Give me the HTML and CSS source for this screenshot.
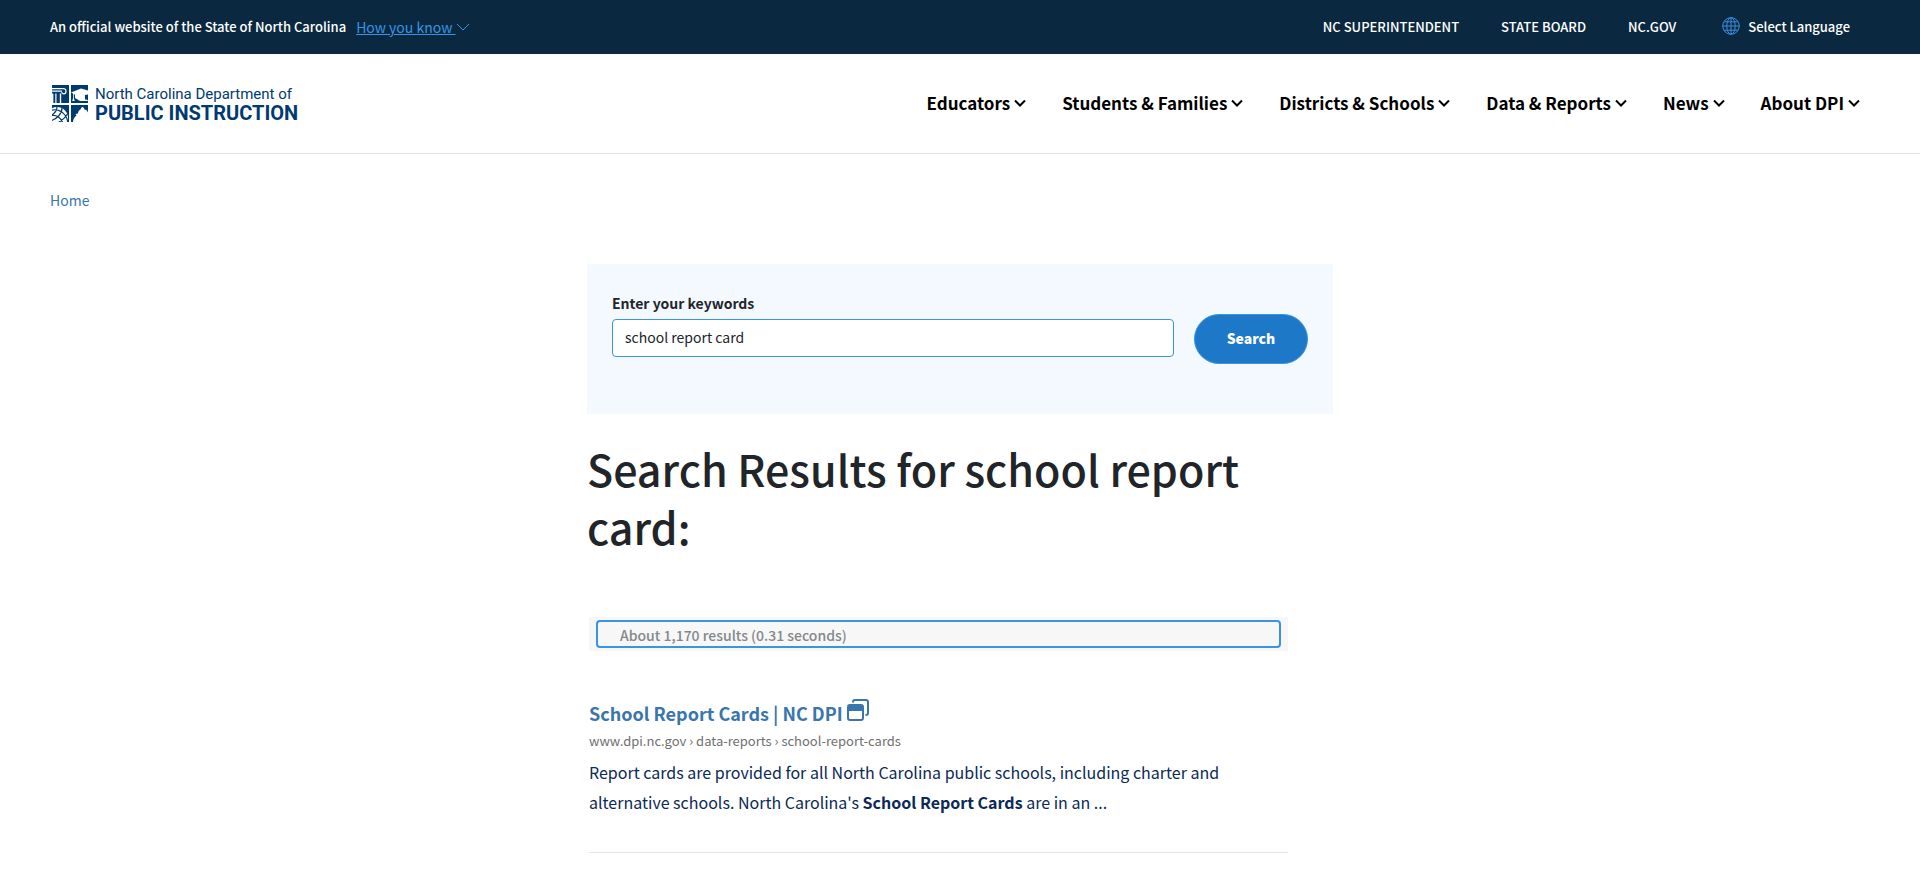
FILE: index.html
```html
<!DOCTYPE html>
<html lang="en">
<head>
<meta charset="utf-8">
<meta name="viewport" content="width=device-width, initial-scale=1">
<title>Search | NC DPI</title>
<link rel="stylesheet" href="styles.css">
</head>
<body>
<div class="topbar">
  <div class="official">
    <span>An official website of the State of North Carolina</span>
    <a class="know" href="#"><span class="know-text">How you know&nbsp;</span><svg class="know-icon" viewBox="0 0 14 14" aria-hidden="true"><path d="M1 4l6 6 6-6"/></svg></a>
  </div>
  <nav class="utility" aria-label="Utility">
    <a href="#">NC SUPERINTENDENT</a>
    <a href="#">STATE BOARD</a>
    <a href="#">NC.GOV</a>
    <button class="language" type="button"><svg class="globe" viewBox="0 0 18 18" aria-hidden="true"><circle cx="9" cy="9" r="8.300"/><ellipse cx="9" cy="9" rx="4.200" ry="8.300"/><path d="M9 .7v16.600M.7 9h16.600M2 4.800h14M2 13.200h14"/></svg><span>Select Language</span></button>
  </nav>
</div>
<header class="header">
  <a class="logo" href="#" aria-label="North Carolina Department of Public Instruction">
    <svg class="seal" viewBox="0 0 36 37" aria-hidden="true">
      <path class="ink" d="M0 0h17v18H0zM19 0h17v18H19zM0 20h17v17H0zM19 20h17v17H19z"/>
      <path class="cut" d="M0 3h10v1.200H0zM0 5.600h10v1.200H0zM0 8.500h1.400V18H0zM3.300 8.500h1.200V18H3.300zM7.800 8.500h1.400V18H7.800z"/>
      <path class="ring" d="M10 3.800c2.600-.8 4 .6 4 2.400s-1.200 2.600-2.400 2.600-1.800-.8-1.800-1.800"/>
      <path class="cut" d="M19 7.500L29 3.500l7 2v4L33 10v4.500c2 0 3 .5 3 1.500h-8l-5-3V9.700l-1.200-.6v4.200l1 2.700h-2.600l.8-2.700V8.500z"/>
      <path class="cut" d="M21 37c0-3 1.500-5 3.500-6.500l-1-1.500 2.500-.5c0-2 1.200-3.500 2.500-4 .5-1.500 1-2.500 2-2.500s1.500 1 2 2.500l2 .5 1.500 2.500v9.500z"/>
      <svg x="0" y="20" width="17" height="17" viewBox="0 20 17 17">
        <circle class="cut" cx="5" cy="33" r="11"/>
        <path class="grid" d="M-2 26c6-3 12 0 15 4s3 6 3 9M-2 31c6-2 10 1 13 7M5 22c0 4-3 7-7 9M10 23c0 6-5 11-12 13M15.500 29c-3 5-6 7-10 9"/>
      </svg>
    </svg>
    <span class="logo-text"><span class="logo-top">North Carolina Department of</span><span class="logo-main">PUBLIC INSTRUCTION</span></span>
  </a>
  <nav class="main-nav" aria-label="Main">
    <button type="button">Educators<svg viewBox="0 0 12 8" aria-hidden="true"><path d="M1 1.500l5 5 5-5"/></svg></button>
    <button type="button">Students &amp; Families<svg viewBox="0 0 12 8" aria-hidden="true"><path d="M1 1.500l5 5 5-5"/></svg></button>
    <button type="button">Districts &amp; Schools<svg viewBox="0 0 12 8" aria-hidden="true"><path d="M1 1.500l5 5 5-5"/></svg></button>
    <button type="button">Data &amp; Reports<svg viewBox="0 0 12 8" aria-hidden="true"><path d="M1 1.500l5 5 5-5"/></svg></button>
    <button type="button">News<svg viewBox="0 0 12 8" aria-hidden="true"><path d="M1 1.500l5 5 5-5"/></svg></button>
    <button type="button">About DPI<svg viewBox="0 0 12 8" aria-hidden="true"><path d="M1 1.500l5 5 5-5"/></svg></button>
  </nav>
</header>
<nav class="breadcrumb" aria-label="Breadcrumb"><a href="#">Home</a></nav>
<main class="content">
  <form class="search">
    <div class="field">
      <label for="keywords">Enter your keywords</label>
      <input id="keywords" type="text" value="school report card">
    </div>
    <button class="submit" type="submit">Search</button>
  </form>
  <h1>Search Results for school report card:</h1>
  <section class="results">
    <div class="info"><div class="info-box">About 1,170 results (0.31 seconds)</div></div>
    <article class="result">
      <h2><a href="#">School Report Cards | NC DPI<svg class="window" viewBox="0 0 22 22" aria-hidden="true"><rect class="line" x="1" y="6" width="15" height="15" rx="2"/><path class="fill" d="M1 12V8a2 2 0 0 1 2-2h11a2 2 0 0 1 2 2v4z"/><path class="line" d="M6 3.500V3a2 2 0 0 1 2-2h11a2 2 0 0 1 2 2v11a2 2 0 0 1-2 2h-.5"/></svg></a></h2>
      <div class="url">www.dpi.nc.gov › data-reports › school-report-cards</div>
      <p>Report cards are provided for all North Carolina public schools, including charter and alternative schools. North Carolina's <b>School Report Cards</b> are in an ...</p>
    </article>
  </section>
</main>
</body>
</html>
```
FILE: styles.css
```css
* { box-sizing: border-box; }
body {
  margin: 0;
  background: #fff;
  color: #212529;
  font-family: "Noto Sans CJK SC", "Noto Sans", sans-serif;
  font-size: 16px;
}
a { color: inherit; text-decoration: none; }
button { margin: 0; padding: 0; border: 0; background: none; color: inherit; font: inherit; cursor: pointer; }
svg { flex: none; fill: none; }

.topbar {
  display: flex;
  justify-content: space-between;
  align-items: center;
  height: 54px;
  padding: 0 70px 0 50px;
  background: #0a2940;
  color: #fff;
  font-size: 13px;
  font-weight: 500;
  line-height: 20px;
}
.official { display: flex; gap: 10px; }
.know { display: flex; align-items: center; color: #3a93e4; font-size: 14px; font-weight: 400; }
.know-text { text-decoration: underline; }
.know-icon { width: 14px; height: 14px; stroke: #3a93e4; }
.utility { display: flex; align-items: center; gap: 42px; }
.language { display: flex; align-items: flex-start; gap: 8px; margin-left: 4px; }
.globe { width: 18px; height: 18px; stroke: #3a8fdf; }

.header {
  display: flex;
  justify-content: space-between;
  align-items: center;
  height: 100px;
  padding: 0 60px 0 52px;
  border-bottom: 1px solid #e0e0e0;
}
.logo { display: flex; gap: 7px; color: #003a70; }
.seal { width: 36px; height: 37px; }
.seal .ink { fill: #003a70; }
.seal .cut { fill: #fff; }
.seal .grid { stroke: #003a70; stroke-width: 1.2; }
.seal .ring { stroke: #fff; stroke-width: 1.2; }
.logo-text { display: flex; flex-direction: column; font-family: Roboto, "Liberation Sans", sans-serif; }
.logo-top { font-size: 15px; line-height: 18px; }
.logo-main { font-size: 20px; font-weight: 700; line-height: 20px; }
.main-nav { display: flex; gap: 36px; padding-bottom: 2px; color: #000; font-size: 17px; font-weight: 700; line-height: 24px; }
.main-nav button { display: flex; align-items: center; gap: 4px; }
.main-nav svg { width: 12px; height: 8px; stroke: #000; stroke-width: 2; }

.breadcrumb { padding: 35px 50px 0; color: #3a76ab; font-size: 14px; line-height: 22px; }

.content { width: 100%; max-width: 746px; margin: 53px auto 0; }
.search { display: flex; gap: 20px; height: 150px; padding: 27px 25px; background: #f4f8ff; }
.field { flex: 1; display: flex; flex-direction: column; gap: 4px; }
.field label { font-size: 14px; font-weight: 700; line-height: 24px; }
.field input {
  width: 100%;
  height: 38px;
  padding: 0 12px 2px;
  border: 1px solid #3a93e4;
  border-radius: 4px;
  background: #fff;
  color: #212529;
  font: inherit;
  font-size: 14px;
}
.submit {
  width: 114px;
  height: 50px;
  margin-top: 23px;
  padding-bottom: 2px;
  border: 1px solid #3a93e4;
  border-radius: 25px;
  background: #1e78c8;
  color: #fff;
  font-size: 14px;
  font-weight: 900;
}
h1 { margin: 25px 0 0; font-size: 43px; font-weight: 500; line-height: 58px; }
.results { width: 701px; max-width: 100%; margin-top: 62px; padding-left: 2px; }
.info { padding: 3px 7px; background: #f7f7f7; }
.info-box { height: 28px; padding: 0 22px; border: 2px solid #3a93e4; border-radius: 4px; color: #84888c; font-size: 14px; font-weight: 500; line-height: 26px; }
.result { margin-top: 48px; padding-bottom: 35px; border-bottom: 1px solid #e0e3e5; }
.result h2 { margin: 0; color: #3a76ab; font-size: 18px; font-weight: 700; line-height: 28px; }
.result h2 a { display: flex; gap: 4px; }
.window { width: 22px; height: 22px; }
.window .line { stroke: #3a76ab; stroke-width: 2; }
.window .fill { fill: #3a76ab; }
.url { margin-top: 2px; color: #707070; font-size: 13px; line-height: 24px; }
.result p { margin: 4px 0 0; color: #0b2a55; font-size: 16px; line-height: 30px; }
```
